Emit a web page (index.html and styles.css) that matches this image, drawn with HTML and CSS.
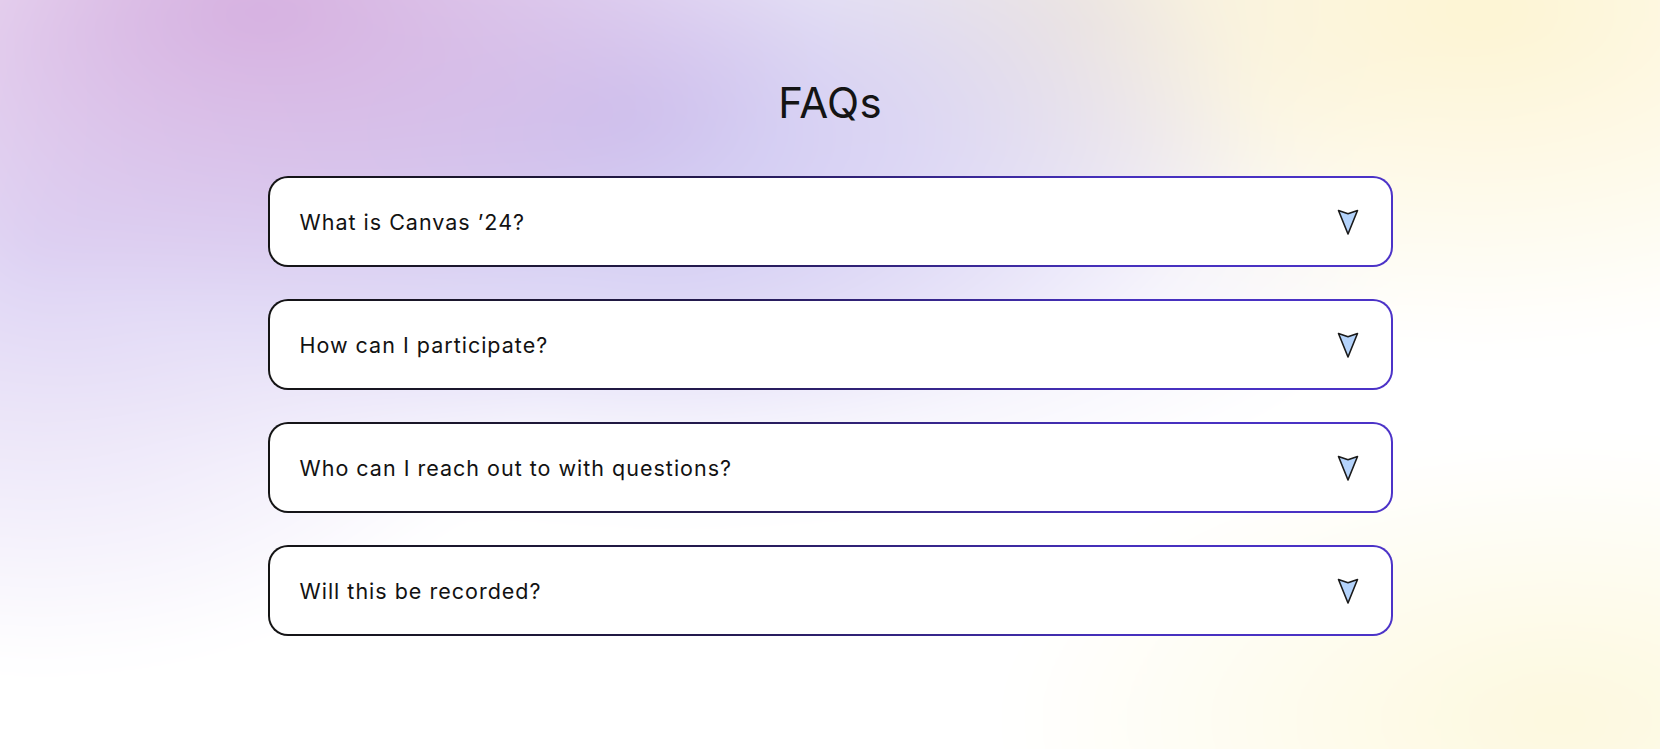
FILE: index.html
```html
<!DOCTYPE html>
<html lang="en">
<head>
<meta charset="utf-8">
<title>FAQs</title>
<link rel="stylesheet" href="styles.css">
</head>
<body>
  <div class="page">
    <div class="backdrop"></div>
    <main class="faq">
      <h2 class="faq-title">FAQs</h2>
      <div class="faq-list">
        <button class="faq-item" type="button">
          <span class="faq-question">What is Canvas ’24?</span>
          <svg class="faq-arrow" viewBox="0 0 24 28" aria-hidden="true"><path d="M2.5 2.5 L12 5.8 L21.5 2.5 L12 26 Z"/></svg>
        </button>
        <button class="faq-item" type="button">
          <span class="faq-question">How can I participate?</span>
          <svg class="faq-arrow" viewBox="0 0 24 28" aria-hidden="true"><path d="M2.5 2.5 L12 5.8 L21.5 2.5 L12 26 Z"/></svg>
        </button>
        <button class="faq-item" type="button">
          <span class="faq-question">Who can I reach out to with questions?</span>
          <svg class="faq-arrow" viewBox="0 0 24 28" aria-hidden="true"><path d="M2.5 2.5 L12 5.8 L21.5 2.5 L12 26 Z"/></svg>
        </button>
        <button class="faq-item" type="button">
          <span class="faq-question">Will this be recorded?</span>
          <svg class="faq-arrow" viewBox="0 0 24 28" aria-hidden="true"><path d="M2.5 2.5 L12 5.8 L21.5 2.5 L12 26 Z"/></svg>
        </button>
      </div>
    </main>
  </div>
</body>
</html>
```

FILE: styles.css
```css
html, body {
  margin: 0;
  padding: 0;
}

body {
  background: #ffffff;
  font-family: Inter, "Noto Sans", "Liberation Sans", sans-serif;
  color: #111;
}

.page {
  position: relative;
  height: 749px;
  overflow: hidden;
}

/* soft colour wash behind the section, oversized so the blur has no faded edge */
.backdrop {
  position: absolute;
  top: -80px;
  left: -80px;
  right: -80px;
  bottom: -80px;
  z-index: 0;
  background:
    radial-gradient(ellipse 560px 300px at 340px 90px, rgba(214, 176, 224, 1), rgba(214, 176, 224, 0) 100%),
    radial-gradient(ellipse 640px 320px at 700px 200px, rgba(204, 196, 240, 1), rgba(204, 196, 240, 0) 100%),
    radial-gradient(ellipse 540px 420px at 120px 330px, rgba(216, 204, 242, 0.85), rgba(216, 204, 242, 0) 100%),
    radial-gradient(ellipse 720px 260px at 760px 340px, rgba(220, 214, 246, 0.75), rgba(220, 214, 246, 0) 100%),
    radial-gradient(ellipse 600px 340px at 1560px 90px, rgba(253, 244, 210, 1), rgba(253, 244, 210, 0) 100%),
    radial-gradient(ellipse 380px 220px at 1160px 90px, rgba(234, 228, 226, 0.9), rgba(234, 228, 226, 0) 100%),
    radial-gradient(ellipse 560px 280px at 1640px 800px, rgba(253, 248, 220, 0.95), rgba(253, 248, 220, 0) 100%),
    #ffffff;
  filter: blur(20px);
}

.faq {
  position: relative;
  z-index: 1;
  display: flex;
  flex-direction: column;
  align-items: center;
  padding-top: 78px;
}

.faq-title {
  margin: 0 0 48px;
  font-size: 42px;
  line-height: 50px;
  font-weight: 400;
  letter-spacing: 0.2px;
  color: #141414;
}

.faq-list {
  display: flex;
  flex-direction: column;
  gap: 32px;
  width: 1125px;
}

.faq-item {
  box-sizing: border-box;
  display: flex;
  align-items: center;
  justify-content: space-between;
  width: 100%;
  height: 91px;
  padding: 0 31px 0 30px;
  border: 2px solid transparent;
  border-radius: 20px;
  background:
    linear-gradient(#ffffff, #ffffff) padding-box,
    linear-gradient(90deg, #141414 0%, #241a50 40%, #4630bd 75%, #4c33c8 100%) border-box;
  font: inherit;
  color: inherit;
  text-align: left;
  cursor: pointer;
}

.faq-question {
  font-size: 21.5px;
  font-weight: 400;
  letter-spacing: 1px;
  color: #121212;
}

.faq-arrow {
  width: 24px;
  height: 28px;
  flex: none;
}

.faq-arrow path {
  fill: #b4d3fb;
  stroke: #1b1b1b;
  stroke-width: 1.6;
  stroke-linejoin: round;
}
```
